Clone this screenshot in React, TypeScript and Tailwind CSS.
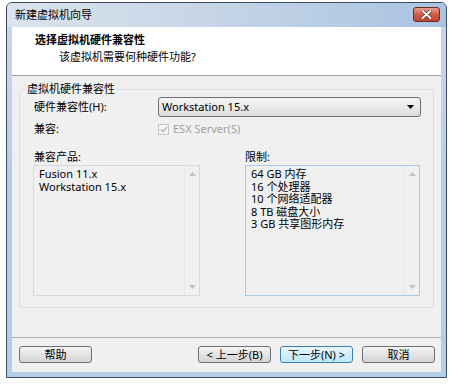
const font = {
  fontFamily: '"Noto Sans", "Noto Sans CJK SC", sans-serif',
};

const compatProducts = ["Fusion 11.x", "Workstation 15.x"];
const limits = ["64 GB 内存", "16 个处理器", "10 个网络适配器", "8 TB 磁盘大小", "3 GB 共享图形内存"];

const ScrollArrows = () => (
  <div className="w-[15px] flex flex-col items-center justify-between border-l border-[#e6e6e6] py-[6px]">
    <svg width="7" height="4" viewBox="0 0 7 4">
      <path d="M0 4 L3.5 0 L7 4 Z" fill="#c2c2c2" />
    </svg>
    <svg width="7" height="4" viewBox="0 0 7 4">
      <path d="M0 0 L3.5 4 L7 0 Z" fill="#c2c2c2" />
    </svg>
  </div>
);

const ListBox = ({ items, width, border }: { items: string[]; width: string; border: string }) => (
  <div className={`${width} ${border} h-[131px] border flex bg-[#f0f0f0]`}>
    <div className="flex-1 pl-[5px] pt-[2px] text-[11px] leading-[12.5px] text-black">
      {items.map((item) => (
        <div key={item}>{item}</div>
      ))}
    </div>
    <ScrollArrows />
  </div>
);

const WinButton = ({ label, primary }: { label: string; primary?: boolean }) => (
  <div
    className={`w-[73px] h-[17px] rounded-[3px] border flex items-center justify-center text-[11px] leading-none text-black ${
      primary
        ? "border-[#3c7fb1] bg-gradient-to-b from-[#eaf6fd] to-[#bee6fd]"
        : "border-[#707070] bg-gradient-to-b from-[#f4f4f4] to-[#d4d4d4]"
    }`}
  >
    {label}
  </div>
);

export default function App() {
  return (
    <div className="w-[456px] h-[387px] bg-white pt-[2px] pl-[6px]" style={font}>
      <div className="w-[441px] h-[376px] border border-[#3d4b5c] rounded-t-[6px] flex flex-col bg-gradient-to-b from-[#c9d8ea] via-[#b7cde6] to-[#b4cde8]">
        {/* title bar */}
        <div className="h-[24px] flex items-center pl-[8px] pr-[6px] rounded-t-[5px] bg-gradient-to-r from-[#dbe3ec] via-[#c4d4e6] to-[#a9c3e2]">
          <span className="flex-1 text-[11px] text-black">新建虚拟机向导</span>
          <div className="w-[27px] h-[15px] mt-[-1px] rounded-[3px] border border-[#6f2a20] bg-gradient-to-b from-[#e6a08f] via-[#d15b45] to-[#c14430] flex items-center justify-center">
            <svg width="11" height="9" viewBox="0 0 11 9">
              <path d="M1.5 1 L9.5 8 M9.5 1 L1.5 8" stroke="#5a2a22" strokeWidth="3.4" strokeLinecap="round" />
              <path d="M1.5 1 L9.5 8 M9.5 1 L1.5 8" stroke="#ffffff" strokeWidth="2" strokeLinecap="round" />
            </svg>
          </div>
        </div>

        {/* client */}
        <div className="mx-[5px] h-[345px] bg-[#f0f0f0] flex flex-col">
          <div className="h-[49px] bg-white border-b border-[#a0a0a0] pt-[6px]">
            <div className="pl-[23px] text-[11px] leading-[14px] font-bold text-black">选择虚拟机硬件兼容性</div>
            <div className="pl-[47px] mt-[3px] text-[11px] leading-[14px] text-black">该虚拟机需要何种硬件功能?</div>
          </div>

          <div className="mx-[7px] mt-[13px] h-[219px] border border-[#d5dfe5] rounded-[3px] pl-[13px] pr-[12px]">
            <div className="-mt-[8px] -ml-[7px] h-[14px] flex">
              <span className="bg-[#f0f0f0] px-[1px] text-[11px] leading-[14px] text-black">虚拟机硬件兼容性</span>
            </div>

            <div className="mt-[1px] flex items-center h-[20px]">
              <span className="w-[125px] pl-[1px] text-[11px] text-black">硬件兼容性(H):</span>
              <div className="flex-1 h-[20px] rounded-[3px] border border-[#707070] bg-gradient-to-b from-[#f3f3f3] via-[#ebebeb] to-[#dcdcdc] flex items-center pl-[3px] pr-[6px]">
                <span className="flex-1 text-[11px] text-black">Workstation 15.x</span>
                <svg width="7" height="4" viewBox="0 0 7 4">
                  <path d="M0 0 L7 0 L3.5 4 Z" fill="#000" />
                </svg>
              </div>
            </div>

            <div className="mt-[5px] flex items-center h-[14px]">
              <span className="w-[125px] pl-[1px] text-[11px] text-black">兼容:</span>
              <div className="w-[11px] h-[11px] border border-[#c4c4c4] bg-[#f4f4f4] flex items-center justify-center">
                <svg width="8" height="7" viewBox="0 0 8 7">
                  <path d="M1 3.5 L3 5.5 L7 1" stroke="#b0b0b0" strokeWidth="1.3" fill="none" />
                </svg>
              </div>
              <span className="ml-[4px] text-[11px] text-[#a0a0a0]">ESX Server(S)</span>
            </div>

            <div className="mt-[14px] flex">
              <div className="flex flex-col">
                <span className="pl-[1px] h-[15px] text-[11px] leading-[14px] text-black">兼容产品:</span>
                <ListBox items={compatProducts} width="w-[167px]" border="border-[#d9d9d9]" />
              </div>
              <div className="ml-[45px] flex flex-col">
                <span className="h-[15px] text-[11px] leading-[14px] text-black">限制:</span>
                <ListBox items={limits} width="w-[175px]" border="border-[#a9c9e9]" />
              </div>
            </div>
          </div>

          <div className="mt-[29px] border-t border-[#b0b0b0]" />

          <div className="mt-[8px] flex pl-[7px] pr-[6px]">
            <WinButton label="帮助" />
            <div className="flex-1" />
            <div className="flex gap-[9px]">
              <WinButton label="< 上一步(B)" />
              <WinButton label="下一步(N) >" primary />
              <WinButton label="取消" />
            </div>
          </div>
        </div>
        <div className="flex-1" />
      </div>
    </div>
  );
}
